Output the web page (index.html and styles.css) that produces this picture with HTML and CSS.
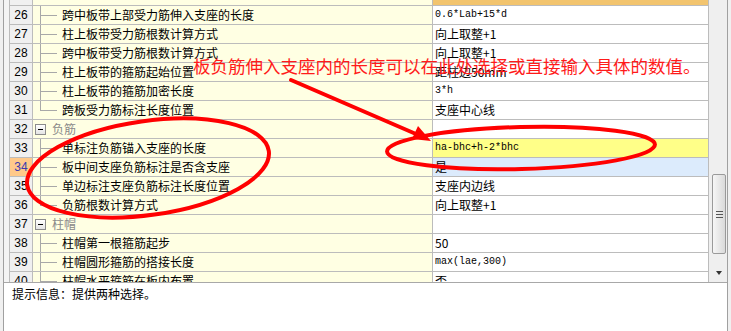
FILE: index.html
```html
<!DOCTYPE html>
<html lang="zh-CN">
<head>
  <meta charset="UTF-8" />
  <title>属性设置</title>
  <link rel="stylesheet" href="styles.css">
</head>
<body>
  <div class="frame">
    <div class="grid-area">
      <div class="gutter"></div>
      <div class="table">
        <div class="row head"><div class="num"></div><div class="name"></div><div class="val"></div></div>
        <div class="row"><div class="num">26</div><div class="name"><span class="tree"></span>跨中板带上部受力筋伸入支座的长度</div><div class="val mono">0.6*Lab+15*d</div></div>
        <div class="row"><div class="num">27</div><div class="name"><span class="tree"></span>柱上板带受力筋根数计算方式</div><div class="val">向上取整+1</div></div>
        <div class="row"><div class="num">28</div><div class="name"><span class="tree"></span>跨中板带受力筋根数计算方式</div><div class="val">向上取整+1</div></div>
        <div class="row"><div class="num">29</div><div class="name"><span class="tree"></span>柱上板带的箍筋起始位置</div><div class="val">距柱边50mm</div></div>
        <div class="row"><div class="num">30</div><div class="name"><span class="tree"></span>柱上板带的箍筋加密长度</div><div class="val mono">3*h</div></div>
        <div class="row"><div class="num">31</div><div class="name"><span class="tree last"></span>跨板受力筋标注长度位置</div><div class="val">支座中心线</div></div>
        <div class="row"><div class="num">32</div><div class="name group"><span class="box"></span>负筋</div><div class="val"></div></div>
        <div class="row"><div class="num">33</div><div class="name"><span class="tree"></span>单标注负筋锚入支座的长度</div><div class="val mono edit">ha-bhc+h-2*bhc</div></div>
        <div class="row"><div class="num current">34</div><div class="name"><span class="tree"></span>板中间支座负筋标注是否含支座</div><div class="val picked">是</div></div>
        <div class="row"><div class="num">35</div><div class="name"><span class="tree"></span>单边标注支座负筋标注长度位置</div><div class="val">支座内边线</div></div>
        <div class="row"><div class="num">36</div><div class="name"><span class="tree last"></span>负筋根数计算方式</div><div class="val">向上取整+1</div></div>
        <div class="row"><div class="num">37</div><div class="name group"><span class="box"></span>柱帽</div><div class="val"></div></div>
        <div class="row"><div class="num">38</div><div class="name"><span class="tree"></span>柱帽第一根箍筋起步</div><div class="val">50</div></div>
        <div class="row"><div class="num">39</div><div class="name"><span class="tree"></span>柱帽圆形箍筋的搭接长度</div><div class="val mono">max(lae,300)</div></div>
        <div class="row"><div class="num">40</div><div class="name"><span class="tree"></span>柱帽水平箍筋在板内布置</div><div class="val">否</div></div>
      </div>
      <div class="scrollbar">
        <div class="thumb"><span class="grip"></span></div>
        <div class="down"><span class="tri"></span></div>
      </div>
    </div>
    <div class="hint">提示信息：提供两种选择。</div>

    <svg class="marks" width="731" height="331" viewBox="0 0 731 331">
      <line x1="291" y1="80" x2="416" y2="134" stroke="#ff0000" stroke-width="4" stroke-linecap="round"/>
      <polygon points="431,141 412,139 418,126" fill="#ff0000"/>
      <ellipse cx="521" cy="148" rx="134" ry="21" transform="rotate(-1.5 521 148)" fill="none" stroke="#ff0000" stroke-width="4"/>
      <ellipse cx="148" cy="168" rx="122" ry="47" transform="rotate(-8 148 168)" fill="none" stroke="#ff0000" stroke-width="4"/>
    </svg>
    <div class="note">板负筋伸入支座内的长度可以在此处选择或直接输入具体的数值。</div>
  </div>
</body>
</html>
```

FILE: styles.css
```css
html, body {
  margin: 0;
  padding: 0;
  background: #f0f0f0;
  font-family: "Noto Sans CJK SC", "Liberation Sans", sans-serif;
  font-size: 12px;
  color: #000;
}
.frame {
  position: relative;
  margin-left: 3px;
  width: 723px;
  height: 331px;
  border-left: 1px solid #a0a0a0;
  border-right: 1px solid #a0a0a0;
  background: #fff;
  display: flex;
  flex-direction: column;
}
.grid-area {
  display: flex;
  height: 282px;
  border-bottom: 1px solid #a8a8a8;
  overflow: hidden;
}
.gutter {
  width: 5px;
  background: #f4f4f4;
}
.table {
  width: 700px;
  display: flex;
  flex-direction: column;
}
.row {
  display: flex;
  flex-shrink: 0;
  height: 19px;
  box-sizing: border-box;
  border-bottom: 1px solid #bcbcbc;
}
.row.head {
  height: 6px;
}
.row.head .val {
  background: #f2c46e;
}
.num {
  width: 24px;
  box-sizing: border-box;
  border-left: 1px solid #bcbcbc;
  border-right: 1px solid #bcbcbc;
  background: #f0f0f0;
  font-family: "Liberation Sans", sans-serif;
  font-size: 12px;
  line-height: 18px;
  text-align: center;
}
.num.current {
  background: #ffc98a;
  color: #3a3ab0;
}
.name {
  width: 400px;
  box-sizing: border-box;
  border-right: 1px solid #bcbcbc;
  background: #ffffe3;
  display: flex;
  align-items: center;
  line-height: 18px;
  white-space: nowrap;
  overflow: hidden;
}
.tree {
  flex-shrink: 0;
  width: 29px;
  align-self: stretch;
  background:
    linear-gradient(#a8a8a8, #a8a8a8) 7px 0 / 1px 100% no-repeat,
    linear-gradient(#a8a8a8, #a8a8a8) 8px 9px / 16px 1px no-repeat;
}
.tree.last {
  background-size: 1px 10px, 16px 1px;
}
.name.group {
  color: #8a8a8a;
  gap: 6px;
}
.box {
  flex-shrink: 0;
  width: 11px;
  height: 11px;
  margin-left: 2px;
  box-sizing: border-box;
  border: 1px solid #8c8c8c;
  background:
    linear-gradient(#000, #000) center / 5px 1px no-repeat,
    linear-gradient(#ffffff, #e4e4e4);
}
.val {
  width: 276px;
  box-sizing: border-box;
  border-right: 1px solid #bcbcbc;
  padding-left: 2px;
  background: #fff;
  line-height: 18px;
  white-space: nowrap;
  overflow: hidden;
}
.val.mono {
  font-family: "Liberation Mono", monospace;
  font-size: 10px;
}
.val.edit {
  background: #ffff88;
}
.val.picked {
  background: #dcebfc;
}
.scrollbar {
  width: 18px;
  background: #efefef;
  display: flex;
  flex-direction: column;
}
.thumb {
  margin: 174px 1px 0 3px;
  height: 80px;
  box-sizing: border-box;
  border: 1px solid #9a9a9a;
  border-radius: 2px;
  background: linear-gradient(to right, #f6f6f6, #dadada);
  display: flex;
  align-items: center;
  justify-content: center;
}
.grip {
  width: 7px;
  height: 7px;
  background: repeating-linear-gradient(#555 0 1px, transparent 1px 3px);
}
.down {
  flex: 1;
  display: flex;
  align-items: flex-end;
  justify-content: center;
  padding: 0 0 7px 2px;
}
.tri {
  width: 0;
  height: 0;
  border-top: 4px solid #333;
  border-left: 3px solid transparent;
  border-right: 3px solid transparent;
}
.hint {
  flex: 1;
  padding: 3px 8px;
  line-height: 16px;
}
.marks {
  position: absolute;
  left: -4px;
  top: 0;
  pointer-events: none;
}
.note {
  position: absolute;
  left: 189px;
  top: 57px;
  font-size: 17.5px;
  line-height: 18px;
  color: #ff1a1a;
  white-space: nowrap;
}
```
